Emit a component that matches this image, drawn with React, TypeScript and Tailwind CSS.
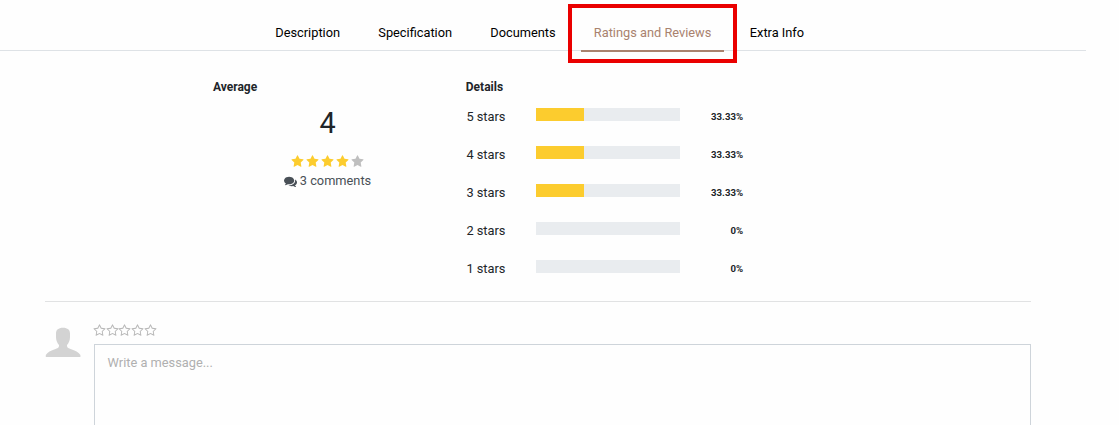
const STAR =
  'M1728 647q0 22-26 48l-363 354 86 500q1 7 1 20 0 21-10.5 35.5t-30.5 14.5q-19 0-40-12l-449-236-449 236q-22 12-40 12-21 0-31.5-14.5t-10.5-35.5q0-6 2-20l86-500-364-354q-25-27-25-48 0-37 56-46l502-73 225-455q19-41 49-41t49 41l225 455 502 73q56 9 56 46z';
const STAR_OUTLINE =
  'M1201 1004l306-297-422-62-189-382-189 382-422 62 306 297-73 421 378-199 377 199zm527-357q0 22-26 48l-363 354 86 500q1 7 1 20 0 50-41 50-19 0-40-12l-449-236-449 236q-22 12-40 12-21 0-31.5-14.5t-10.5-35.5q0-6 2-20l86-500-364-354q-25-27-25-48 0-37 56-46l502-73 225-455q19-41 49-41t49 41l225 455 502 73q56 9 56 46z';
const COMMENTS =
  'M1408 768q0 139-94 257t-256.5 186.5-353.5 68.5q-86 0-176-16-124 88-278 128-36 9-86 16h-3q-11 0-20.5-8t-11.5-21q-1-3-1-6.5t.5-6.5 2-6l2.5-5 3.5-5.5 4-5 4.5-5 4-4.5q5-6 23-25t26-29.5 22.5-29 25-38.5 20.5-44q-124-72-195-177t-71-224q0-139 94-257t256.5-186.5 353.5-68.5 353.5 68.5 256.5 186.5 94 257zm384 256q0 120-71 224.5t-195 176.5q10 24 20.5 44t25 38.5 22.5 29 26 29.5 23 25q1 1 4 4.5t4.5 5 4 5 3.5 5.5l2.5 5 2 6 .5 6.5-1 6.5q-3 14-13 22t-22 7q-50-7-86-16-154-40-278-128-90 16-176 16-271 0-472-132 58 4 88 4 161 0 309-45t264-129q125-92 192-212t67-254q0-77-23-152 129 71 204 178t75 230z';

function Icon({ path, className }: { path: string; className: string }) {
  return (
    <svg viewBox="0 0 1792 1792" fill="currentColor" className={className} aria-hidden="true">
      <path d={path} />
    </svg>
  );
}

function Tabs() {
  return (
    <nav className="flex h-[51px] w-[1086px] border-b border-[#dee2e6] pl-[262px] text-[12.8px] leading-5 text-black">
      <a className="w-[103px] pt-[23px] pl-[13.3px]">Description</a>
      <a className="w-28 pt-[23px] pl-[13.3px]">Specification</a>
      <a className="w-[91px] pt-[23px] pl-[13.3px]">Documents</a>
      <div className="relative mt-1 h-[59px] w-[169px] border-4 border-[#ea0000] px-[9px]">
        <a className="block h-11 border-b-2 border-[#a9826e] pt-[15px] pl-[12.8px] whitespace-nowrap text-[#a9826e]">
          Ratings and Reviews
        </a>
      </div>
      <a className="pt-[23px] pl-[12.8px]">Extra Info</a>
    </nav>
  );
}

const ratings = [
  { stars: 5, percent: 33.33 },
  { stars: 4, percent: 33.33 },
  { stars: 3, percent: 33.33 },
  { stars: 2, percent: 0 },
  { stars: 1, percent: 0 },
];

function Summary() {
  return (
    <section className="flex h-[250px] pt-[26px] pl-[213px]">
      <div className="w-[253px]">
        <h2 className="h-5 text-xs leading-5 font-bold">Average</h2>
        <div className="flex w-[229px] flex-col items-center">
          <div className="mt-[6px] h-10 text-[28.8px] leading-10">4</div>
          <div className="mt-[12px] flex h-[13px] gap-[2px] text-[#fccc2e]">
            {[1, 2, 3, 4, 5].map((n) => (
              <Icon key={n} path={STAR} className={n <= 4 ? 'size-[13px]' : 'size-[13px] text-[#bfbfbf]'} />
            ))}
          </div>
          <div className="mt-[3px] flex h-5 items-center gap-[3px] text-[12.8px] leading-5 text-[#495057]">
            <Icon path={COMMENTS} className="size-[13px]" />
            <span>3 comments</span>
          </div>
        </div>
      </div>
      <div className="w-[277px]">
        <h2 className="-ml-[0.2px] h-5 text-xs leading-5 font-bold">Details</h2>
        {ratings.map(({ stars, percent }) => (
          <div key={stars} className="flex h-[38px] pt-[10px]">
            <span className="w-[70px] pl-[0.4px] text-[12.8px] leading-5">{stars} stars</span>
            <div className="mt-px h-[13px] w-36 bg-[#e9ecef]">
              <div className="h-full bg-[#fccc2e]" style={{ width: `${percent}%` }} />
            </div>
            <span className="flex-1 text-right text-[9.6px] leading-5 font-bold">{percent}%</span>
          </div>
        ))}
      </div>
    </section>
  );
}

function ReviewForm() {
  return (
    <section className="mr-[88px] ml-[45px] flex h-[124px] border-t border-[#e1e2e3]">
      <svg viewBox="0 0 36 36" className="mt-[19px] size-9 text-[#d3d3d3]" fill="currentColor" aria-hidden="true">
        <path d="M18 6.8C13.4 6.8 11 9 11 12.5V16C11 19.5 12.3 22 14 24C14.3 26 13.4 27 10.5 28C6 29.5 2.2 31.4 .8 34V36H35.4V34C34 31.4 30 29.5 25.6 28C22.7 27 21.7 26 22 24C23.7 22 25 19.5 25 16V12.5C25 9 22.6 6.8 18 6.8Z" />
      </svg>
      <div className="flex flex-1 flex-col pl-[13px]">
        <div className="mt-[22px] -ml-[0.8px] flex h-[14px] text-[#b8b8b8]">
          {[1, 2, 3, 4, 5].map((n) => (
            <Icon key={n} path={STAR_OUTLINE} className="mr-[-0.4px] size-[13px]" />
          ))}
        </div>
        <textarea
          className="mt-[6px] block w-full flex-1 resize-none border border-b-0 border-[#ced4da] bg-transparent px-[12.6px] py-2 text-[12.8px] leading-5 outline-none placeholder:text-[#b0b0b0]"
          placeholder="Write a message..."
        />
      </div>
    </section>
  );
}

export default function App() {
  return (
    <main className="h-[425px] w-[1119px] overflow-hidden bg-[#fefefe] font-['Roboto',sans-serif] text-[#212529]">
      <Tabs />
      <Summary />
      <ReviewForm />
    </main>
  );
}
